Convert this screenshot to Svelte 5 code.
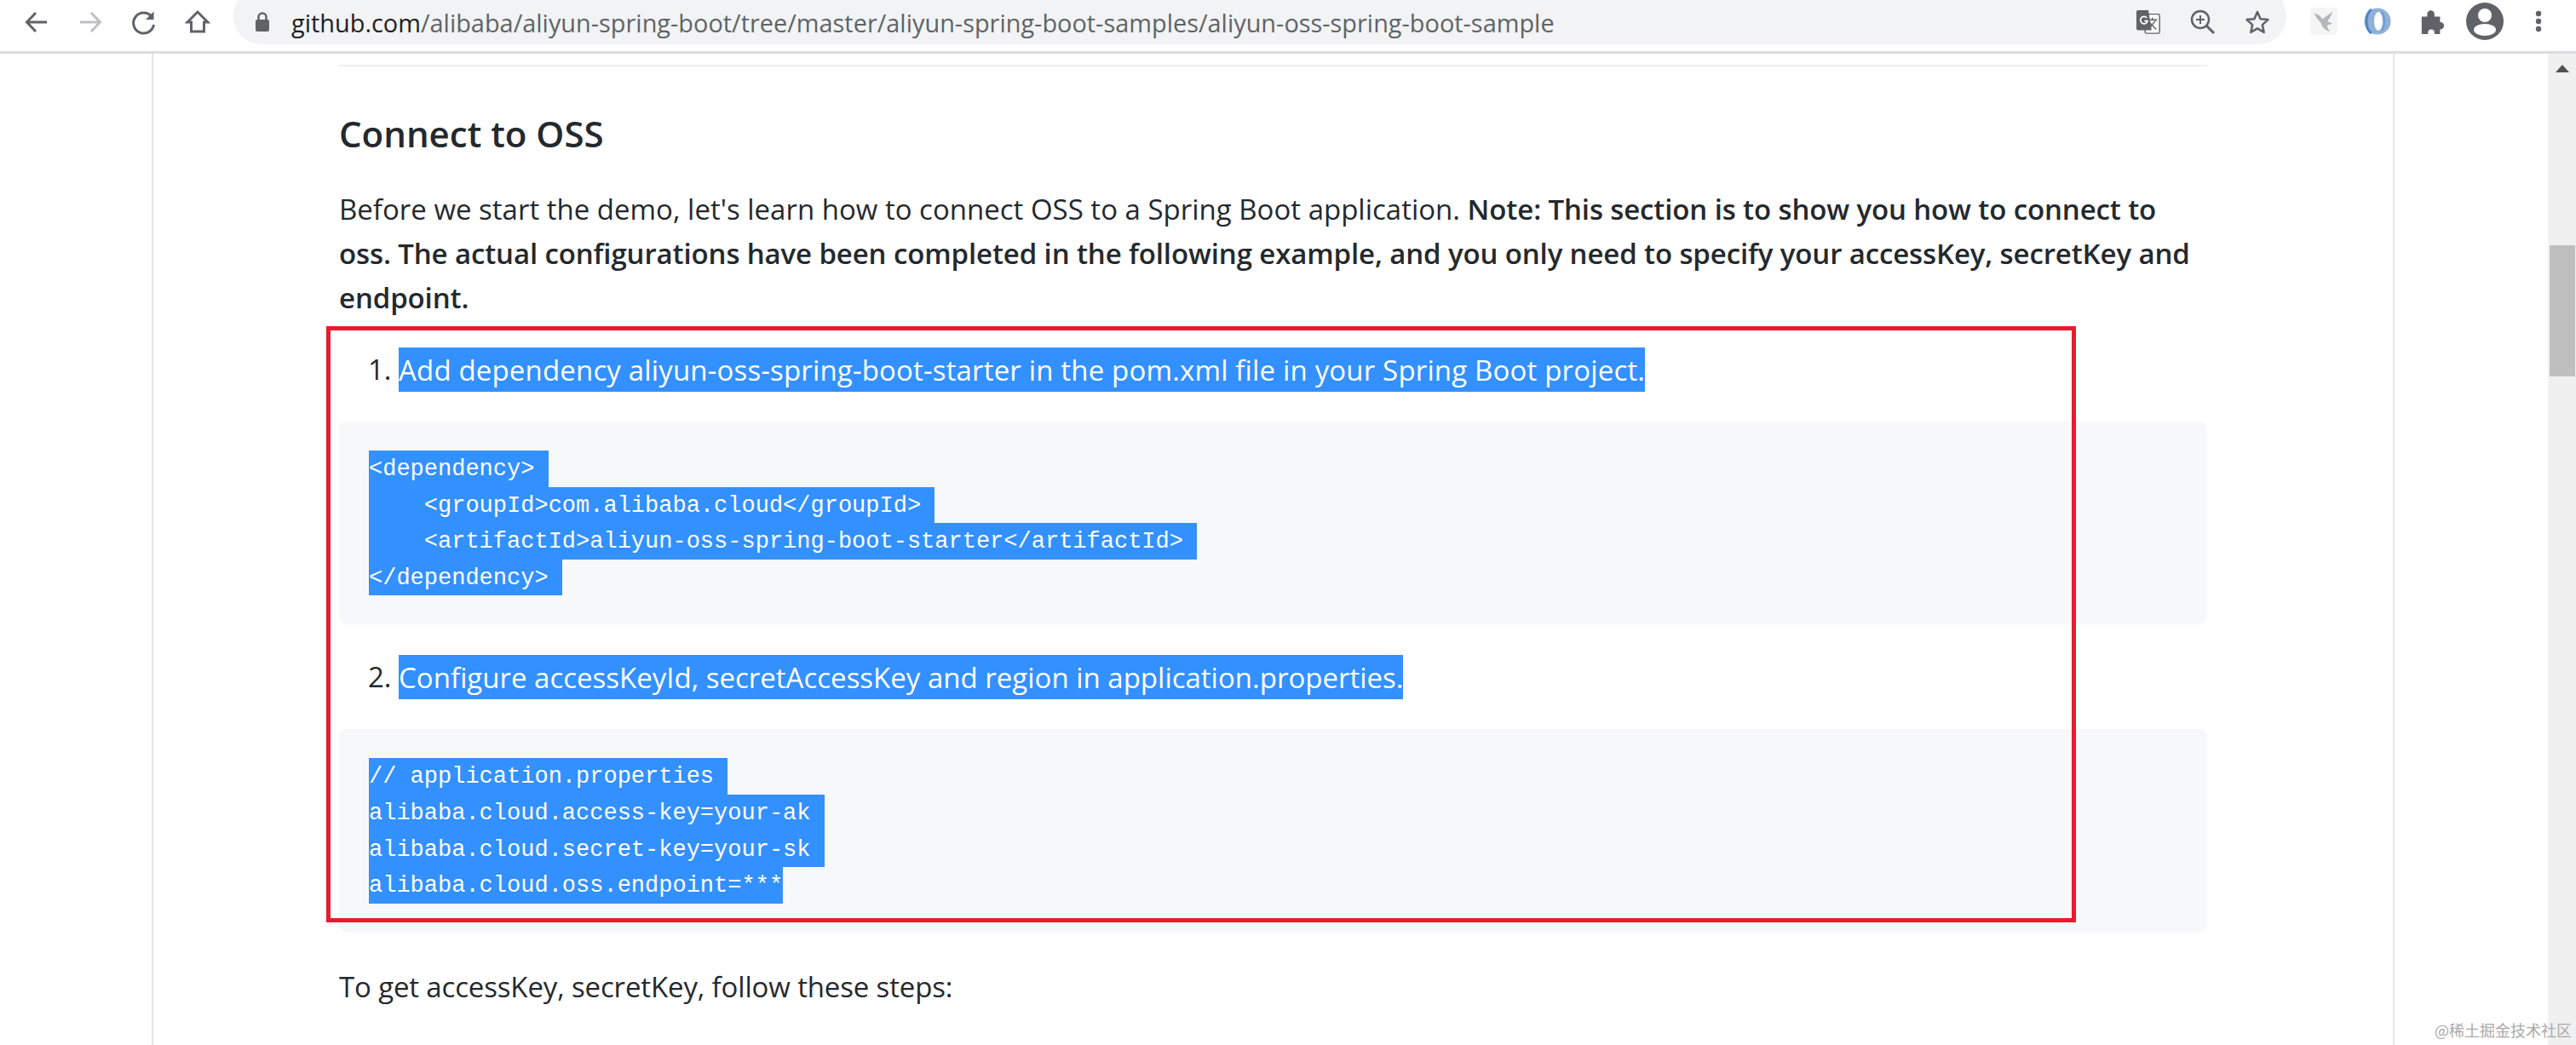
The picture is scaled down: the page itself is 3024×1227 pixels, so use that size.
<script>
  const depLines = [
    "<dependency> ",
    "    <groupId>com.alibaba.cloud</groupId> ",
    "    <artifactId>aliyun-oss-spring-boot-starter</artifactId> ",
    "</dependency> ",
  ];
  const propLines = [
    "// application.properties ",
    "alibaba.cloud.access-key=your-ak ",
    "alibaba.cloud.secret-key=your-sk ",
    "alibaba.cloud.oss.endpoint=***",
  ];
</script>

<div class="window">
  <header class="toolbar">
    <button class="nav" aria-label="Back">
      <svg width="30" height="30" viewBox="0 0 30 30"><path d="M27 15H4M14 4 3.500 15 14 26" fill="none" stroke="#5f6368" stroke-width="3"/></svg>
    </button>
    <button class="nav" aria-label="Forward">
      <svg width="30" height="30" viewBox="0 0 30 30"><path d="M3 15h23M16 4l10.500 11L16 26" fill="none" stroke="#bdc0c4" stroke-width="3"/></svg>
    </button>
    <button class="nav" aria-label="Reload">
      <svg width="30" height="30" viewBox="0 0 30 30"><path d="M24 8.500A12 12 0 1 0 26.500 18" fill="none" stroke="#5f6368" stroke-width="3"/><path d="M26.500 2.500V12H17z" fill="#5f6368"/></svg>
    </button>
    <button class="nav" aria-label="Home">
      <svg width="30" height="30" viewBox="0 0 30 30"><path d="M15 3 3 15h4.500v11h15V15H27z" fill="none" stroke="#5f6368" stroke-width="3"/></svg>
    </button>
    <div class="omnibox">
      <svg class="lock" width="18" height="26" viewBox="0 0 18 26"><path d="M4.500 11V7a4.500 4.500 0 0 1 9 0v4" fill="none" stroke="#5f6368" stroke-width="2.500"/><rect x="1" y="10" width="16" height="14" rx="2" fill="#5f6368"/></svg>
      <span class="url"><b>github.com</b>/alibaba/aliyun-spring-boot/tree/master/aliyun-spring-boot-samples/aliyun-oss-spring-boot-sample</span>
      <div class="omni-icons">
        <svg width="30" height="30" viewBox="0 0 30 32"><rect x="11" y="6" width="18" height="24" rx="1.500" fill="#fff" stroke="#5f6368" stroke-width="1.500"/><path d="M14 13h12M20 10v3M16 24l8-10M17 17l8 8" fill="none" stroke="#5f6368" stroke-width="1.500"/><path d="M2 1h13l4 25H2a2 2 0 0 1-2-2V3a2 2 0 0 1 2-2z" fill="#5f6368"/><path d="M13 10.500a4.500 4.500 0 1 0 1 4h-4" fill="none" stroke="#fff" stroke-width="1.800"/></svg>
        <svg width="30" height="30" viewBox="0 0 30 30"><circle cx="12" cy="12" r="10" fill="none" stroke="#5f6368" stroke-width="2.500"/><path d="m19 19 9 9" stroke="#5f6368" stroke-width="3"/><path d="M12 7v10M7 12h10" stroke="#5f6368" stroke-width="2"/></svg>
        <svg width="30" height="30" viewBox="0 0 30 30"><path d="m15 3 3.600 8.200 8.900.9-6.700 6 1.900 8.800L15 22.400 7.300 26.900l1.900-8.800-6.700-6 8.900-.9z" fill="none" stroke="#5f6368" stroke-width="2.500" stroke-linejoin="round"/></svg>
      </div>
    </div>
    <div class="ext-icons">
      <span class="ext-tile">
        <svg width="26" height="28" viewBox="0 0 30 32"><path d="M2 5c5 1 9 4 11 8 3-2 8-6 14-10-2 5-4 9-7 12 1 2 4 3 7 4-3 1-5 2-7 2-1 3 1 6 3 9-6-2-11-6-12-12C8 15 4 10 2 5z" fill="#b4b6b8"/></svg>
      </span>
      <svg class="ring" width="32" height="32" viewBox="0 0 32 32">
        <ellipse cx="16" cy="16" rx="15.500" ry="15.500" fill="#8fb0d8"/>
        <path d="M9 2C1 7 1 25 9 30" fill="none" stroke="#4f86c4" stroke-width="3"/>
        <ellipse cx="17" cy="16" rx="5" ry="11" fill="#fff"/>
        <path d="M21 5c4 6 4 16 0 22" fill="none" stroke="#6f9bd0" stroke-width="2"/>
      </svg>
      <svg class="puzzle" width="30" height="30" viewBox="0 0 30 32"><path d="M2 10h7V7a4.500 4.500 0 0 1 9 0v3h7v7h.5a4.500 4.500 0 0 1 0 9H25v6h-7v-2a4 4 0 0 0-8 0v2H2z" fill="#5f6368"/></svg>
      <svg class="avatar" width="44" height="44" viewBox="0 0 44 44"><circle cx="22" cy="22" r="22" fill="#5f6368"/><circle cx="22" cy="15" r="8" fill="#fff"/><ellipse cx="22" cy="32" rx="13" ry="7" fill="#fff"/></svg>
      <svg class="dots" width="10" height="32" viewBox="0 0 10 32"><circle cx="5" cy="7" r="3.200" fill="#5f6368"/><circle cx="5" cy="16" r="3.200" fill="#5f6368"/><circle cx="5" cy="25" r="3.200" fill="#5f6368"/></svg>
    </div>
  </header>

  <div class="viewport">
    <main class="page">
      <article class="readme">
        <hr />
        <h3>Connect to OSS</h3>
        <p>Before we start the demo, let's learn how to connect OSS to a Spring Boot application. <strong>Note: This section is to show you how to connect to oss. The actual configurations have been completed in the following example, and you only need to specify your accessKey, secretKey and endpoint.</strong></p>
        <ol>
          <li>
            <span class="sel first">Add dependency aliyun-oss-spring-boot-starter in the pom.xml file in your Spring Boot project.</span>
            <pre>{#each depLines as line}<span class="sel-line">{line}</span>{/each}</pre>
          </li>
          <li>
            <span class="sel">Configure accessKeyId, secretAccessKey and region in application.properties.</span>
            <pre>{#each propLines as line}<span class="sel-line">{line}</span>{/each}</pre>
          </li>
        </ol>
        <p class="last">To get accessKey, secretKey, follow these steps:</p>
      </article>
    </main>
    <aside class="scrollbar">
      <span class="arrow"></span>
      <span class="thumb"></span>
    </aside>
    <div class="annotation"></div>
    <div class="watermark">@稀土掘金技术社区</div>
  </div>
</div>

<style>
  :global(body) {
    margin: 0;
    background: #fff;
  }
  .window {
    width: 3024px;
    height: 1227px;
    overflow: hidden;
    display: flex;
    flex-direction: column;
    font-family: "Open Sans", "Noto Sans", sans-serif;
    color: #24292e;
  }
  .toolbar {
    height: 60px;
    flex: none;
    border-bottom: 3px solid #dcdddf;
    display: flex;
    align-items: flex-start;
    padding-left: 11px;
  }
  .nav {
    width: 63px;
    height: 52px;
    padding: 0;
    border: 0;
    background: none;
    display: flex;
    align-items: center;
    justify-content: center;
  }
  .omnibox {
    width: 2410px;
    height: 66px;
    margin: -14px 0 0 11px;
    padding-top: 14px;
    box-sizing: border-box;
    border-radius: 33px;
    background: #f1f3f4;
    display: flex;
    align-items: center;
  }
  .lock {
    margin-left: 25px;
  }
  .url {
    margin-left: 25px;
    font-size: 28.900px;
    color: #5f6368;
    white-space: nowrap;
  }
  .url b {
    font-weight: 400;
    color: #202124;
  }
  .omni-icons {
    margin-left: auto;
    margin-right: 19px;
    display: flex;
    gap: 34px;
    align-items: center;
  }
  .ext-icons {
    flex: 1;
    height: 50px;
    display: flex;
    align-items: center;
    padding-left: 28px;
  }
  .ext-tile {
    width: 32px;
    height: 32px;
    border-radius: 4px;
    background: #f5f5f5;
    display: flex;
    align-items: center;
    justify-content: center;
  }
  .ring {
    margin-left: 31px;
  }
  .puzzle {
    margin-left: 33px;
  }
  .avatar {
    margin-left: 25px;
  }
  .dots {
    margin-left: 36px;
  }
  .viewport {
    flex: 1;
    display: flex;
    position: relative;
    min-height: 0;
  }
  .page {
    flex: 1;
    min-width: 0;
  }
  .readme {
    margin-left: 178px;
    width: 2633px;
    height: 100%;
    box-sizing: border-box;
    border-left: 2px solid #e3e4e6;
    border-right: 2px solid #e3e4e6;
    padding: 13px 218px 0;
    overflow: hidden;
  }
  hr {
    margin: 0;
    border: 0;
    height: 2px;
    background: #eceef0;
  }
  h3 {
    margin: 53px 0 0;
    font-size: 42px;
    line-height: 52px;
    font-weight: 600;
  }
  p {
    margin: 37px 0 0;
    font-size: 33px;
    line-height: 52px;
  }
  strong {
    font-weight: 600;
    letter-spacing: -0.130px;
  }
  ol {
    margin: 32px 0 0;
    padding: 0 0 0 70px;
    font-size: 33px;
    line-height: 52px;
  }
  li + li {
    margin-top: 36px;
  }
  .sel {
    display: inline-block;
    vertical-align: top;
    padding-top: 2px;
    line-height: 50px;
    background: #3390ff;
    color: #fff;
  }
  .sel.first {
    letter-spacing: 0.160px;
  }
  pre {
    margin: 35px 0 0 -70px;
    padding: 34px 35px;
    background: #f6f8fa;
    border-radius: 9px;
    font-family: "Liberation Mono", monospace;
    font-size: 27px;
    line-height: 42.600px;
  }
  .sel-line {
    display: block;
    width: fit-content;
    white-space: pre;
    padding-top: 2px;
    line-height: 40.600px;
    background: #3390ff;
    color: #fff;
  }
  p.last {
    margin-top: 38px;
    letter-spacing: -0.150px;
  }
  .scrollbar {
    width: 33px;
    flex: none;
    background: #f0f0f0;
    display: flex;
    flex-direction: column;
    align-items: center;
  }
  .arrow {
    margin-top: 13px;
    width: 0;
    height: 0;
    border-left: 8px solid transparent;
    border-right: 8px solid transparent;
    border-bottom: 9px solid #505050;
  }
  .thumb {
    margin-top: 203px;
    width: 30px;
    height: 154px;
    background: #bfbfbf;
  }
  /* red box drawn over the screenshot */
  .annotation {
    position: absolute;
    left: 383px;
    top: 320px;
    width: 2054px;
    height: 700px;
    box-sizing: border-box;
    border: 5px solid #e81c2e;
    pointer-events: none;
  }
  .watermark {
    position: absolute;
    right: 5px;
    bottom: 7px;
    font-family: "Noto Sans CJK SC", sans-serif;
    font-size: 18px;
    line-height: 22px;
    color: #a9a9a9;
  }
</style>
